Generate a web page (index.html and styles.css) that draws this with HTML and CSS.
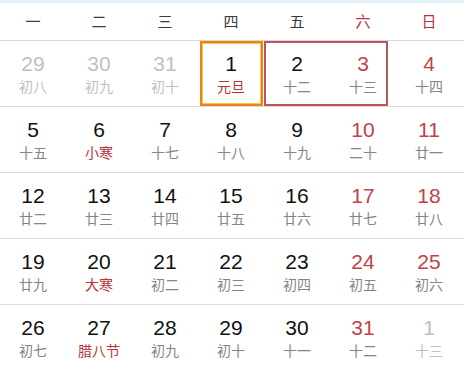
FILE: index.html
```html
<!DOCTYPE html>
<html lang="zh-CN">
<head>
<meta charset="utf-8">
<title>日历</title>
<link rel="stylesheet" href="styles.css">
</head>
<body>
<div class="cal">
  <div class="topbar"></div>
  <div class="head">
    <span>一</span><span>二</span><span>三</span><span>四</span><span>五</span><span class="red">六</span><span class="red">日</span>
  </div>
  <div class="row">
    <div class="cell other"><b>29</b><i>初八</i></div>
    <div class="cell other"><b>30</b><i>初九</i></div>
    <div class="cell other"><b>31</b><i>初十</i></div>
    <div class="cell today"><b>1</b><i class="term">元旦</i></div>
    <div class="cell"><b>2</b><i>十二</i></div>
    <div class="cell wk"><b>3</b><i>十三</i></div>
    <div class="cell wk"><b>4</b><i>十四</i></div>
    <span class="holiday"></span>
  </div>
  <div class="row">
    <div class="cell"><b>5</b><i>十五</i></div>
    <div class="cell"><b>6</b><i class="term">小寒</i></div>
    <div class="cell"><b>7</b><i>十七</i></div>
    <div class="cell"><b>8</b><i>十八</i></div>
    <div class="cell"><b>9</b><i>十九</i></div>
    <div class="cell wk"><b>10</b><i>二十</i></div>
    <div class="cell wk"><b>11</b><i>廿一</i></div>
  </div>
  <div class="row">
    <div class="cell"><b>12</b><i>廿二</i></div>
    <div class="cell"><b>13</b><i>廿三</i></div>
    <div class="cell"><b>14</b><i>廿四</i></div>
    <div class="cell"><b>15</b><i>廿五</i></div>
    <div class="cell"><b>16</b><i>廿六</i></div>
    <div class="cell wk"><b>17</b><i>廿七</i></div>
    <div class="cell wk"><b>18</b><i>廿八</i></div>
  </div>
  <div class="row">
    <div class="cell"><b>19</b><i>廿九</i></div>
    <div class="cell"><b>20</b><i class="term">大寒</i></div>
    <div class="cell"><b>21</b><i>初二</i></div>
    <div class="cell"><b>22</b><i>初三</i></div>
    <div class="cell"><b>23</b><i>初四</i></div>
    <div class="cell wk"><b>24</b><i>初五</i></div>
    <div class="cell wk"><b>25</b><i>初六</i></div>
  </div>
  <div class="row last">
    <div class="cell"><b>26</b><i>初七</i></div>
    <div class="cell"><b>27</b><i class="term">腊八节</i></div>
    <div class="cell"><b>28</b><i>初九</i></div>
    <div class="cell"><b>29</b><i>初十</i></div>
    <div class="cell"><b>30</b><i>十一</i></div>
    <div class="cell wk"><b>31</b><i>十二</i></div>
    <div class="cell other"><b>1</b><i>十三</i></div>
  </div>
</div>
</body>
</html>
```

FILE: styles.css
```css
html, body {
  margin: 0;
  padding: 0;
  background: #fff;
}
.cal {
  width: 464px;
  font-family: "Liberation Sans", "Noto Sans CJK SC", sans-serif;
}
.topbar {
  height: 3px;
  background: #e2f1f9;
}
.head {
  display: grid;
  grid-template-columns: repeat(7, 66px);
  height: 37px;
  border-bottom: 1px solid #d8d8d8;
  align-items: center;
  font-family: "Noto Sans CJK SC", sans-serif;
  font-size: 15px;
  color: #3a3a3a;
}
.head span {
  text-align: center;
  line-height: 20px;
  padding-bottom: 1px;
}
.head .red {
  color: #b8323c;
}
.row {
  position: relative;
  display: grid;
  grid-template-columns: repeat(7, 66px);
  height: 65px;
  border-bottom: 1px solid #dcdcdc;
}
.row.last {
  border-bottom: none;
}
.cell {
  position: relative;
  display: flex;
  flex-direction: column;
  align-items: center;
  padding-top: 12px;
}
.cell b {
  font-weight: normal;
  font-size: 21px;
  line-height: 22px;
  color: #111;
}
.cell i {
  font-style: normal;
  font-family: "Noto Sans CJK SC", sans-serif;
  font-size: 14px;
  line-height: 20px;
  margin-top: 1px;
  color: #858585;
}
.cell.wk b {
  color: #c2414a;
}
.cell i.term {
  color: #b83438;
}
.cell.other b,
.cell.other i {
  color: #c0c0c0;
}
.cell.today::after {
  content: "";
  position: absolute;
  left: 2px;
  right: 1px;
  top: 0;
  bottom: 0;
  border: 2px solid #ea8418;
  box-shadow: inset 0 0 0 1px #f7c444;
}
.holiday {
  position: absolute;
  left: 264px;
  width: 124px;
  top: 0;
  height: 65px;
  box-sizing: border-box;
  border: 2px solid #b9565a;
  pointer-events: none;
}
```
